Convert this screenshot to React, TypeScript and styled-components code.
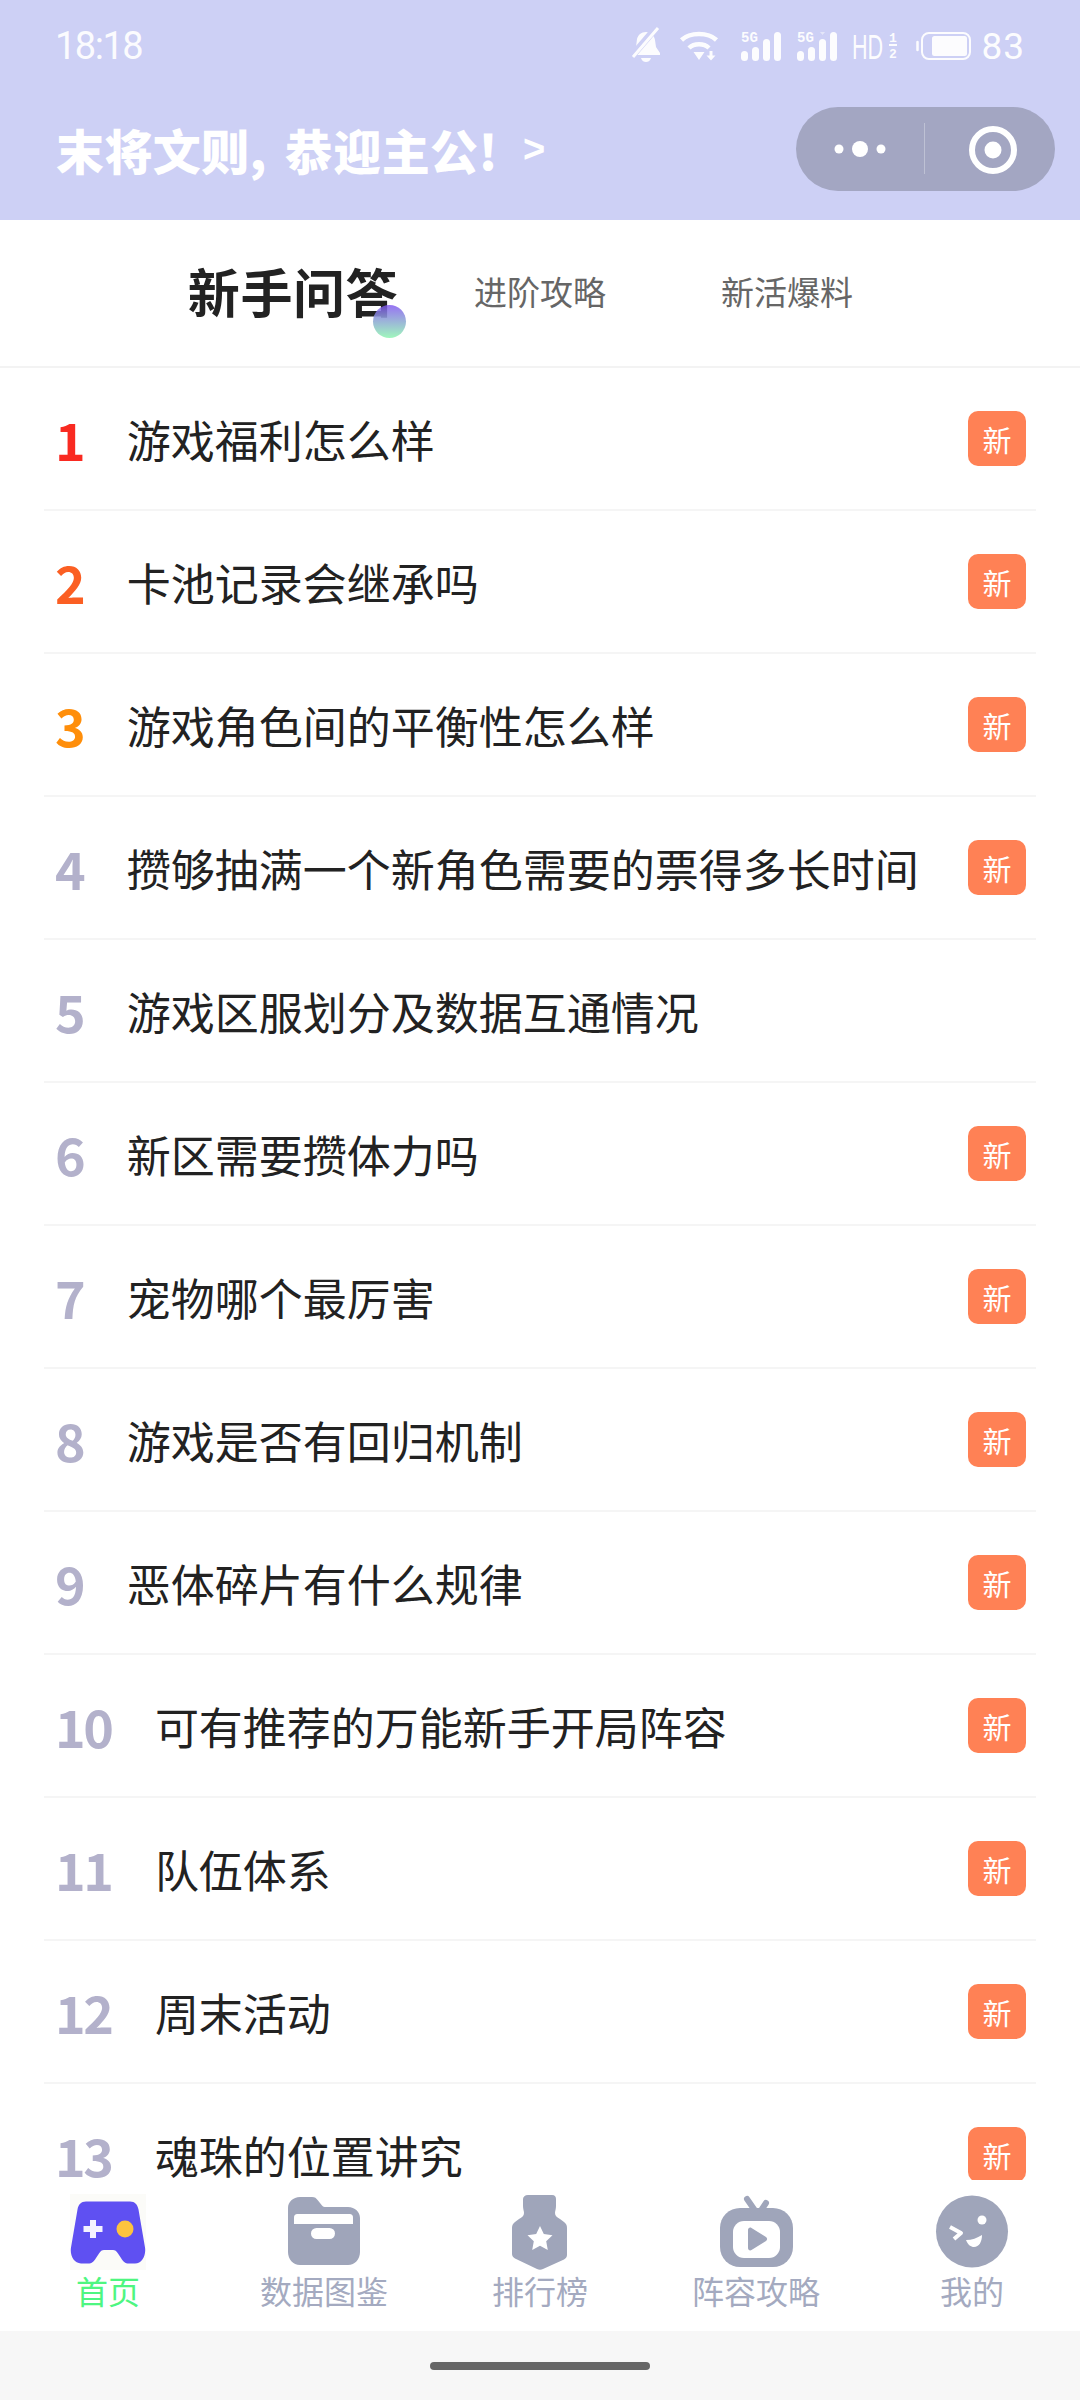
import React from "react";
import styled, { createGlobalStyle } from "styled-components";

const GlobalStyle = createGlobalStyle`
  html, body {
    margin: 0;
    padding: 0;
    background: #fff;
    font-family: "Noto Sans CJK SC", "Noto Sans", sans-serif;
  }
`;

const Page = styled.div`
  width: 1080px;
  height: 2400px;
  display: flex;
  flex-direction: column;
  overflow: hidden;
  background: #fff;
`;

const Header = styled.header`
  height: 220px;
  flex: none;
  background: #cdd0f5;
  color: #fff;
  box-sizing: border-box;
  padding: 0 25px 0 56px;
`;

const StatusBar = styled.div`
  height: 92px;
  padding-right: 31px;
  display: flex;
  align-items: center;
  justify-content: space-between;
`;

const Clock = styled.span`
  font-family: Roboto, sans-serif;
  font-size: 38px;
  letter-spacing: -1.5px;
  margin-left: -1px;
  opacity: 0.92;
`;

const StatusIcons = styled.div`
  display: flex;
  align-items: center;
  opacity: 0.95;
`;

const IconSlot = styled.span<{ $gap: number }>`
  display: block;
  margin-left: ${(p) => p.$gap}px;
  svg {
    display: block;
    overflow: visible;
  }
`;

const Battery = styled.span`
  font-family: Roboto, sans-serif;
  font-size: 37px;
  letter-spacing: 1px;
  margin-left: 10px;
  margin-right: -1px;
`;

const TitleRow = styled.div`
  height: 84px;
  margin-top: 15px;
  display: flex;
  align-items: center;
  justify-content: space-between;
`;

const Greeting = styled.div`
  display: flex;
  align-items: center;
  font-size: 48px;
  font-weight: 900;
  letter-spacing: 0.4px;
  line-height: 84px;
`;

const Comma = styled.span`
  margin-right: 18px;
`;

const Chevron = styled.span`
  font-family: "Liberation Sans", sans-serif;
  font-size: 38px;
  font-weight: 700;
  margin-left: 25px;
`;

const Capsule = styled.div`
  width: 259px;
  height: 84px;
  border-radius: 42px;
  background: #a3a6c2;
  display: flex;
  align-items: center;
  svg {
    display: block;
  }
`;

const Tabs = styled.nav`
  height: 148px;
  flex: none;
  box-sizing: border-box;
  border-bottom: 2px solid #f3f3f3;
  display: grid;
  grid-template-columns: repeat(3, 247px);
  justify-content: center;
  align-items: center;
`;

const Tab = styled.div<{ $active?: boolean }>`
  position: relative;
  justify-self: center;
  font-size: ${(p) => (p.$active ? "52px" : "33px")};
  font-weight: ${(p) => (p.$active ? 700 : 400)};
  letter-spacing: ${(p) => (p.$active ? "0.6px" : "0")};
  color: ${(p) => (p.$active ? "#222" : "#666")};
  line-height: 60px;
  margin-top: -4px;
`;

const TabDot = styled.i`
  position: absolute;
  right: -8px;
  bottom: -17px;
  width: 33px;
  height: 33px;
  border-radius: 50%;
  background: linear-gradient(180deg, rgba(125, 80, 240, 0.8), #a0f7bd);
`;

const List = styled.main`
  flex: 1;
  min-height: 0;
  overflow: hidden;
  padding: 0 44px;
`;

const Row = styled.div`
  height: 143px;
  box-sizing: border-box;
  border-bottom: 2px solid #f5f5f5;
  display: flex;
  align-items: center;
  padding: 0 10px 0 11px;
`;

const Rank = styled.span<{ $color: string }>`
  font-size: 52px;
  font-weight: 700;
  letter-spacing: -2.5px;
  margin-right: 43.500px;
  color: ${(p) => p.$color};
`;

const Question = styled.span`
  flex: 1;
  font-size: 44px;
  color: #222;
  white-space: nowrap;
`;

const NewBadge = styled.span`
  width: 58px;
  height: 55px;
  border-radius: 10px;
  background: #ff8155;
  color: #fff;
  font-size: 29px;
  display: flex;
  align-items: center;
  justify-content: center;
`;

const TabBar = styled.footer`
  height: 151px;
  flex: none;
  background: #fff;
  display: grid;
  grid-template-columns: repeat(5, 216px);
`;

const BarItem = styled.div<{ $active?: boolean }>`
  display: flex;
  flex-direction: column;
  align-items: center;
  padding-top: 14px;
  color: ${(p) => (p.$active ? "#4ef681" : "#a4aac0")};
  font-size: 32px;
  line-height: 40px;
  svg {
    display: block;
  }
`;

const HomeStrip = styled.div`
  height: 69px;
  flex: none;
  background: #f7f7f7;
  display: flex;
  align-items: center;
  justify-content: center;
`;

const HomePill = styled.div`
  width: 220px;
  height: 8px;
  border-radius: 4px;
  background: #666;
`;

const rows = [
  { q: "游戏福利怎么样", badge: true },
  { q: "卡池记录会继承吗", badge: true },
  { q: "游戏角色间的平衡性怎么样", badge: true },
  { q: "攒够抽满一个新角色需要的票得多长时间", badge: true },
  { q: "游戏区服划分及数据互通情况", badge: false },
  { q: "新区需要攒体力吗", badge: true },
  { q: "宠物哪个最厉害", badge: true },
  { q: "游戏是否有回归机制", badge: true },
  { q: "恶体碎片有什么规律", badge: true },
  { q: "可有推荐的万能新手开局阵容", badge: true },
  { q: "队伍体系", badge: true },
  { q: "周末活动", badge: true },
  { q: "魂珠的位置讲究", badge: true },
];

const rankColor = (i: number) => ["#f92a21", "#fb5f23", "#ff8e0a"][i] || "#b3b1cb";

const ICON = "#9fa5ba";

const HomeIcon = () => (
  <svg width="76" height="76" viewBox="0 0 76 76">
    <rect width="76" height="76" fill="#fbfbf8" />
    <path
      d="M16 7.500h44c5 0 7.500 3 8.500 8l6.500 38c1.200 8-3 16-10 16h-6c-4 0-6-2-8-5.500l-3-4.500c-1.500-2.500-3-3.500-5-3.500H34c-2 0-3.500 1-5 3.500l-3 4.500c-2 3.500-4 5.500-8 5.500h-7c-7 0-11.300-8-10-16l6.500-38c.8-5 3.500-8 8.500-8z"
      fill="#5f50f2"
    />
    <path d="M20 26h6v6h6.500v6H26v6h-6v-6h-6.500v-6H20z" fill="#f4f2ff" />
    <circle cx="55" cy="35" r="8.500" fill="#fdc33f" />
  </svg>
);

const FolderIcon = () => (
  <svg width="76" height="76" viewBox="0 0 76 76">
    <path
      d="M14 3h12c3 0 4 1 6 3.500l4 5c1 1 2 1.500 4 1.500h22c7 0 12 5 12 11v34c0 7-5 13-12 13H14C7 71 2 65 2 58V14C2 8 7 3 14 3z"
      fill={ICON}
    />
    <path d="M8 24c0-3 1-4 4-4h51c3 0 4 1 4 4v6H8z" fill="#fff" />
    <rect x="25" y="34" width="24" height="11" rx="5.500" fill="#fff" />
  </svg>
);

const RankIcon = () => (
  <svg width="76" height="76" viewBox="0 0 76 76">
    <path
      d="M26 1h24c3 0 4 2 4 4v7c0 3-1 5-1 7 0 3 2 4 5 6l4 3c2 1.500 3 3 3 6v27c0 2-1 3-3 4.500L41 75c-2 1-4 1-6 0L13 64.500C11 63 10 62 10 60V34c0-3 1-4.500 3-6l4-3c3-2 5-3 5-6 0-2-1-4-1-7V5c0-2 2-4 5-4z"
      fill={ICON}
    />
    <path
      d="M38 32l3.800 8 8.700 1.200-6.300 6 1.600 8.800-7.800-4.300-7.800 4.300 1.600-8.800-6.300-6 8.700-1.200z"
      fill="#fff"
    />
  </svg>
);

const TvIcon = () => (
  <svg width="76" height="76" viewBox="0 0 76 76">
    <path d="M29 5l9 13M48 9l-6 9" stroke={ICON} strokeWidth="6" strokeLinecap="round" />
    <rect x="2" y="14" width="73" height="59" rx="20" fill={ICON} />
    <rect x="15" y="27" width="47" height="37" rx="11" fill="#fff" />
    <path d="M30 36c0-2 2-3 3.500-2l14.500 9c1.500 1 1.500 3 0 4l-14.500 9c-1.500 1-3.500 0-3.500-2z" fill={ICON} />
  </svg>
);

const FaceIcon = () => (
  <svg width="76" height="76" viewBox="0 0 76 76">
    <circle cx="38" cy="37.500" r="36" fill={ICON} />
    <circle cx="48" cy="26" r="4.500" fill="#fff" />
    <path d="M16 33l11 6-7 6" fill="none" stroke="#fff" strokeWidth="4" strokeLinejoin="round" />
    <path d="M32 46c6 0 11-2 16-5 0 7-3 12-8 12-3 0-6-2-8-7z" fill="#fff" />
  </svg>
);

const tabItems = [
  { label: "首页", icon: <HomeIcon />, active: true },
  { label: "数据图鉴", icon: <FolderIcon /> },
  { label: "排行榜", icon: <RankIcon /> },
  { label: "阵容攻略", icon: <TvIcon /> },
  { label: "我的", icon: <FaceIcon /> },
];

const SilentBell = () => (
  <svg width="30" height="36" viewBox="0 0 30 36" fill="#fff">
    <path d="M15 4c5 0 8 3 9 8l1 7 4 6v2H1v-2l4-6 1-8c1-4 4-7 9-7z" />
    <path d="M10 30h10c-1 3-3 4-5 4s-4-1-5-4z" />
    <path d="M0 29L25 0" stroke="#cdd0f5" strokeWidth="7" />
    <path d="M2 29L27 0" stroke="#fff" strokeWidth="3" />
  </svg>
);

const Wifi = () => (
  <svg width="38" height="30" viewBox="0 0 38 30" fill="none" stroke="#fff">
    <path d="M1.500 9C10 1 28 1 36.500 9" strokeWidth="4.500" />
    <path d="M9 17c5-5 15-5 20 0" strokeWidth="4.500" />
    <path d="M13.500 21h11L19 29z" fill="#fff" stroke="none" />
    <path d="M31 20v5" strokeWidth="3" />
    <path d="M26.500 24.500h9L31 29.500z" fill="#fff" stroke="none" />
  </svg>
);

const Signal = ({ marker }: { marker?: boolean }) => (
  <svg width="41" height="29" viewBox="0 0 41 29" fill="#fff">
    <text x="0" y="10" fontSize="14" fontWeight="700" fontFamily="Liberation Mono, monospace">5G</text>
    {marker && <path d="M23 0h5l-2.500 3z" opacity=".5" />}
    <rect x="0" y="19" width="7" height="10" rx="3.500" />
    <rect x="11" y="15" width="7" height="14" rx="3.500" />
    <rect x="22" y="7" width="7" height="22" rx="3.500" />
    <rect x="33" y="0" width="7" height="29" rx="3.500" />
  </svg>
);

const HdMark = () => (
  <svg width="45" height="28" viewBox="0 0 45 28" fill="#fff">
    <text x="0" y="27" fontSize="36" fontFamily="Liberation Sans, sans-serif" transform="scale(0.6 1)">HD</text>
    <text x="37" y="10" fontSize="13" fontWeight="700" fontFamily="Liberation Mono, monospace">1</text>
    <rect x="37" y="12" width="8" height="2" />
    <text x="37" y="26" fontSize="13" fontWeight="700" fontFamily="Liberation Mono, monospace">2</text>
  </svg>
);

const BatteryIcon = () => (
  <svg width="55" height="28" viewBox="0 0 55 28" fill="none">
    <path d="M1.500 10v8" stroke="#fff" strokeWidth="2.500" strokeLinecap="round" />
    <rect x="6" y="1" width="48" height="26" rx="7" stroke="#fff" strokeWidth="2" />
    <rect x="16" y="4" width="35" height="20" rx="2.500" fill="#fff" />
  </svg>
);

const CapsuleMenu = () => (
  <svg width="129" height="84" viewBox="0 0 129 84" fill="#fff">
    <circle cx="43" cy="42" r="4.500" />
    <circle cx="64" cy="42" r="8" />
    <circle cx="85" cy="42" r="4.500" />
    <path d="M128.500 16v51" stroke="#fff" strokeOpacity=".3" strokeWidth="1" />
  </svg>
);

const CapsuleClose = () => (
  <svg width="130" height="84" viewBox="0 0 130 84" fill="none">
    <circle cx="68" cy="43" r="21" stroke="#fff" strokeWidth="6" />
    <circle cx="68" cy="43" r="8.500" fill="#fff" />
  </svg>
);

const App = () => {
  return (
    <Page>
      <GlobalStyle />
      <Header>
        <StatusBar>
          <Clock>18:18</Clock>
          <StatusIcons>
            <IconSlot $gap={0}>
              <SilentBell />
            </IconSlot>
            <IconSlot $gap={19}>
              <Wifi />
            </IconSlot>
            <IconSlot $gap={23}>
              <Signal />
            </IconSlot>
            <IconSlot $gap={15}>
              <Signal marker />
            </IconSlot>
            <IconSlot $gap={14}>
              <HdMark />
            </IconSlot>
            <IconSlot $gap={19}>
              <BatteryIcon />
            </IconSlot>
            <Battery>83</Battery>
          </StatusIcons>
        </StatusBar>
        <TitleRow>
          <Greeting>
            末将文则<Comma>,</Comma>恭迎主公!
            <Chevron>&gt;</Chevron>
          </Greeting>
          <Capsule>
            <CapsuleMenu />
            <CapsuleClose />
          </Capsule>
        </TitleRow>
      </Header>
      <Tabs>
        <Tab $active>
          新手问答
          <TabDot />
        </Tab>
        <Tab>进阶攻略</Tab>
        <Tab>新活爆料</Tab>
      </Tabs>
      <List>
        {rows.map((row, i) => (
          <Row key={row.q}>
            <Rank $color={rankColor(i)}>{i + 1}</Rank>
            <Question>{row.q}</Question>
            {row.badge && <NewBadge>新</NewBadge>}
          </Row>
        ))}
      </List>
      <TabBar>
        {tabItems.map((item) => (
          <BarItem key={item.label} $active={item.active}>
            {item.icon}
            {item.label}
          </BarItem>
        ))}
      </TabBar>
      <HomeStrip>
        <HomePill />
      </HomeStrip>
    </Page>
  );
};

export default App;
